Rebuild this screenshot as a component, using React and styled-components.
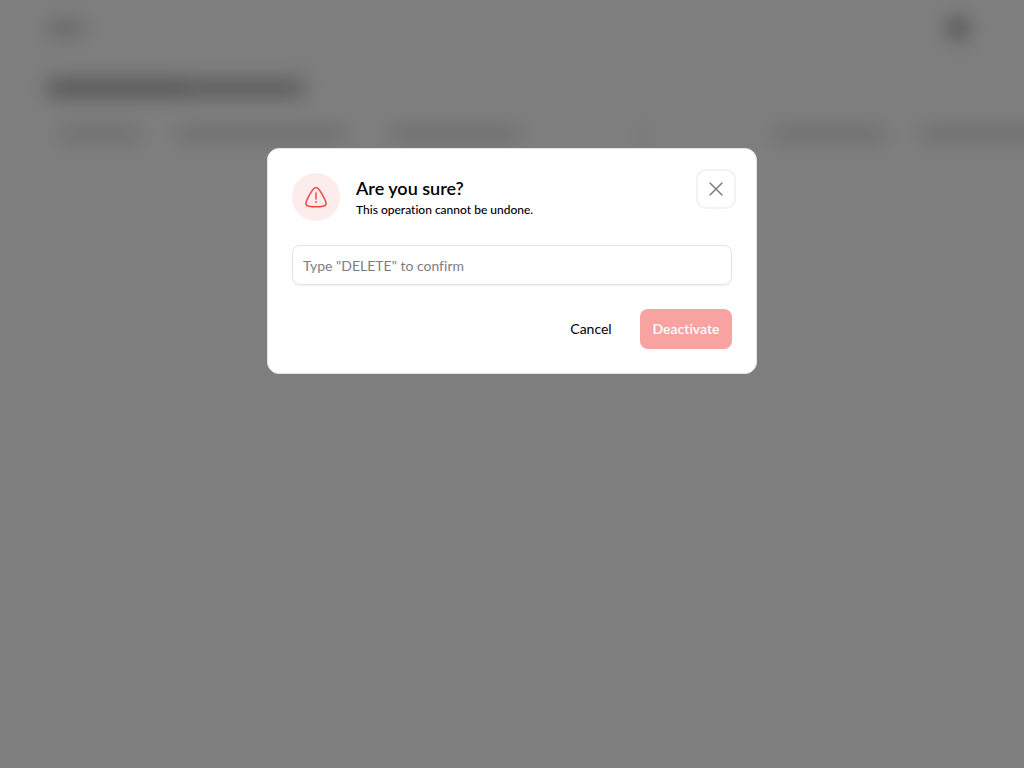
import React from "react";
import styled, { createGlobalStyle } from "styled-components";

const GlobalStyle = createGlobalStyle`
  *, *::before, *::after { box-sizing: border-box; }
  body {
    margin: 0;
    background: #fdfdfd;
    color: #000;
    font-family: Lato, "Open Sans", sans-serif;
    font-size: 14px;
    line-height: 20px;
    font-variant-ligatures: none;
  }
  button, input { font: inherit; font-variant-ligatures: none; }
`;

const Screen = styled.div`
  position: relative;
  min-height: 100vh;
  overflow: hidden;
`;

const Page = styled.div`
  filter: blur(10px);
`;

const Topbar = styled.header`
  display: flex;
  align-items: center;
  justify-content: space-between;
  height: 56px;
  padding: 0 56px 0 48px;
  box-shadow: 0 1px 0 #e8e8e8;
`;

const Block = styled.div`
  flex: none;
  width: ${(p) => p.$width}px;
  height: ${(p) => p.$height || 12}px;
  margin-left: ${(p) => p.$before || 0}px;
  background: rgba(0, 0, 0, ${(p) => p.$tone || 0.16});
`;

const Avatar = styled.div`
  width: 20px;
  height: 20px;
  border-radius: 50%;
  background: #8c8c8c;
`;

const Main = styled.main`
  padding: 24px 48px;
`;

const PageTitle = styled.div`
  display: flex;
`;

const Columns = styled.div`
  display: flex;
  align-items: center;
  height: 20px;
  margin-top: 28px;
  padding-left: 12px;
`;

const Overlay = styled.div`
  position: absolute;
  inset: 0;
  display: flex;
  align-items: flex-start;
  justify-content: center;
  padding: 148px 16px 16px;
  background: rgba(0, 0, 0, 0.5);
`;

const Dialog = styled.section`
  position: relative;
  display: flex;
  flex-direction: column;
  gap: 24px;
  width: 100%;
  max-width: 490px;
  padding: 24px;
  border: 1px solid #e5e5e5;
  border-radius: 12px;
  background: #fff;
`;

const Heading = styled.div`
  display: flex;
  align-items: center;
  gap: 16px;
`;

const WarningBadge = styled.span`
  display: grid;
  place-items: center;
  width: 48px;
  height: 48px;
  border-radius: 50%;
  background: #fdecec;
  color: #ef4444;
`;

const Title = styled.h2`
  margin: 2px 0 0;
  font-size: 18px;
  font-weight: 600;
  line-height: 24px;
`;

const Description = styled.p`
  margin: 0;
  font-size: 12px;
  font-weight: 500;
  line-height: 20px;
`;

const CloseButton = styled.button`
  position: absolute;
  top: 20px;
  right: 20px;
  display: grid;
  place-items: center;
  width: 40px;
  height: 40px;
  padding: 0;
  border: 2px solid #f2f2f2;
  border-radius: 10px;
  background: #fff;
  color: #7e7e7e;
`;

const ConfirmInput = styled.input`
  width: 100%;
  height: 40px;
  padding: 0 10px;
  border: 1px solid #e4e4e4;
  border-radius: 8px;
  background: #fff;
  box-shadow: 0 1px 2px rgba(0, 0, 0, 0.06);
  color: #000;
  outline: none;

  &::placeholder { color: #7e7e7e; opacity: 1; }
`;

const Actions = styled.div`
  display: flex;
  justify-content: flex-end;
  gap: 16px;
`;

const Button = styled.button`
  height: 40px;
  min-width: ${(p) => (p.$danger ? 92 : 66)}px;
  padding: 0 8px;
  border: 0;
  border-radius: 8px;
  background: ${(p) => (p.$danger ? "#f8a2a2" : "transparent")};
  color: ${(p) => (p.$danger ? "#fff" : "#000")};
  font-weight: ${(p) => (p.$danger ? 600 : 400)};
`;

function WarningIcon() {
  return (
    <svg width="24" height="24" viewBox="0 0 24 24" fill="none" stroke="currentColor" strokeWidth="1.5" strokeLinecap="round" strokeLinejoin="round" aria-hidden="true">
      <path d="M8.6 4.900C9.900 3.100 10.900 2.500 12 2.500s2.100.6 3.400 2.400c2 2.800 4.500 7.300 6 10.800 1.300 3 .8 5-2.300 5.500-3.500.5-10.700.5-14.200 0-3.100-.5-3.600-2.500-2.300-5.500 1.500-3.500 4-8 6-10.800Z" />
      <path d="M12 8v6" />
      <path d="M12 17v.1" strokeWidth="1.800" />
    </svg>
  );
}

function CloseIcon() {
  return (
    <svg width="14" height="14" viewBox="0 0 14 14" fill="none" stroke="currentColor" strokeWidth="1.5" strokeLinecap="round" aria-hidden="true">
      <path d="M1 1l12 12M13 1L1 13" />
    </svg>
  );
}

export default function App() {
  return (
    <Screen>
      <GlobalStyle />
      <Page aria-hidden="true">
        <Topbar>
          <Block $width={36} $tone={0.24} />
          <Avatar />
        </Topbar>
        <Main>
          <PageTitle>
            <Block $width={136} $height={16} $tone={0.36} />
            <Block $width={120} $height={16} $tone={0.31} />
          </PageTitle>
          <Columns>
            <Block $width={80} />
            <Block $width={170} $before={36} />
            <Block $width={130} $before={44} />
            <Block $width={4} $height={20} $before={121} />
            <Block $width={112} $before={128} />
            <Block $width={140} $before={36} />
          </Columns>
        </Main>
      </Page>
      <Overlay>
        <Dialog role="dialog" aria-modal="true" aria-labelledby="dialog-title" aria-describedby="dialog-description">
          <Heading>
            <WarningBadge><WarningIcon /></WarningBadge>
            <div>
              <Title id="dialog-title">Are you sure?</Title>
              <Description id="dialog-description">This operation cannot be undone.</Description>
            </div>
          </Heading>
          <ConfirmInput type="text" aria-label={'Type "DELETE" to confirm'} placeholder={'Type "DELETE" to confirm'} />
          <Actions>
            <Button type="button">Cancel</Button>
            <Button type="button" $danger disabled>Deactivate</Button>
          </Actions>
          <CloseButton type="button" aria-label="Close"><CloseIcon /></CloseButton>
        </Dialog>
      </Overlay>
    </Screen>
  );
}
